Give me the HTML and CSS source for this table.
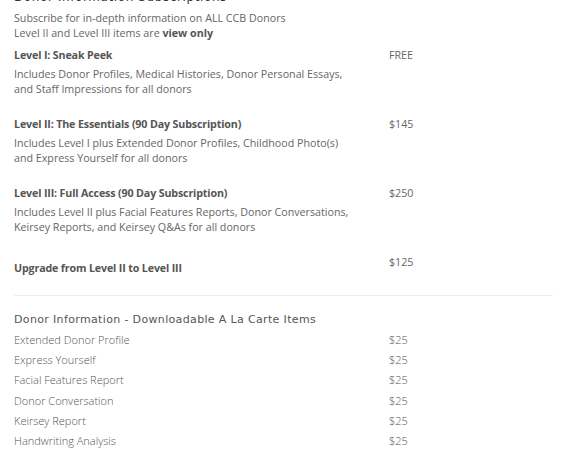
FILE: index.html
```html
<!DOCTYPE html>
<html>
<head>
<meta charset="utf-8">
<link rel="stylesheet" href="styles.css">
</head>
<body>
<div class="page">
  <h2 class="section-title top-title">Donor Information Subscriptions</h2>
  <p class="intro">Subscribe for in-depth information on ALL CCB Donors<br>Level II and Level III items are <b>view only</b></p>

  <div class="level">
    <div class="level-main">
      <div class="level-name">Level I: Sneak Peek</div>
      <div class="level-desc">Includes Donor Profiles, Medical Histories, Donor Personal Essays,<br>and Staff Impressions for all donors</div>
    </div>
    <div class="price">FREE</div>
  </div>

  <div class="level">
    <div class="level-main">
      <div class="level-name">Level II: The Essentials (90 Day Subscription)</div>
      <div class="level-desc">Includes Level I plus Extended Donor Profiles, Childhood Photo(s)<br>and Express Yourself for all donors</div>
    </div>
    <div class="price">$145</div>
  </div>

  <div class="level">
    <div class="level-main">
      <div class="level-name">Level III: Full Access (90 Day Subscription)</div>
      <div class="level-desc">Includes Level II plus Facial Features Reports, Donor Conversations,<br>Keirsey Reports, and Keirsey Q&amp;As for all donors</div>
    </div>
    <div class="price">$250</div>
  </div>

  <div class="level upgrade">
    <div class="level-main">
      <div class="level-name">Upgrade from Level II to Level III</div>
    </div>
    <div class="price">$125</div>
  </div>

  <hr class="divider">

  <h2 class="section-title">Donor Information - Downloadable A La Carte Items</h2>
  <ul class="items">
    <li><span class="item-name">Extended Donor Profile</span><span class="item-price">$25</span></li>
    <li><span class="item-name">Express Yourself</span><span class="item-price">$25</span></li>
    <li><span class="item-name">Facial Features Report</span><span class="item-price">$25</span></li>
    <li><span class="item-name">Donor Conversation</span><span class="item-price">$25</span></li>
    <li><span class="item-name">Keirsey Report</span><span class="item-price">$25</span></li>
    <li><span class="item-name">Handwriting Analysis</span><span class="item-price">$25</span></li>
  </ul>
</div>
</body>
</html>
```
FILE: styles.css
```css
html, body {
  margin: 0;
  padding: 0;
  background: #fff;
}
body {
  font-family: "Open Sans", "Liberation Sans", sans-serif;
  color: #666;
  font-size: 10.7px;
}
.page {
  width: 539px;
  padding: 0 15px 0 14px;
  margin-top: -11px;
}
.section-title {
  font-family: "DejaVu Sans", sans-serif;
  font-weight: normal;
  font-size: 11px;
  letter-spacing: 0.35px;
  color: #555;
  margin: 0;
  line-height: 16px;
}
.top-title {
  font-size: 12px;
  letter-spacing: 0.6px;
  color: #333;
  font-weight: normal;
}
.intro {
  margin: 6px 0 0;
  line-height: 15px;
  color: #666;
}
.intro b {
  color: #555;
  font-weight: 700;
}
.level {
  display: flex;
  margin-top: 7px;
}
.level + .level {
  margin-top: 20px;
}
.level-main {
  width: 375px;
}
.level-name {
  font-weight: 700;
  color: #555;
  line-height: 15px;
  letter-spacing: -0.15px;
}
.level-desc {
  margin-top: 4px;
  line-height: 15px;
  color: #666;
}
.price {
  line-height: 15px;
  color: #666;
}
.upgrade {
  padding-top: 6px;
}
.upgrade .price {
  margin-top: -6px;
}
.divider {
  border: 0;
  border-top: 1px solid #eee;
  margin: 19px 0 16px;
}
.items {
  list-style: none;
  margin: 2px 0 0;
  padding: 0;
}
.items li {
  display: flex;
  line-height: 20.2px;
  font-weight: 300;
  font-size: 11px;
  color: #555;
}
.item-name {
  width: 375px;
}
```
